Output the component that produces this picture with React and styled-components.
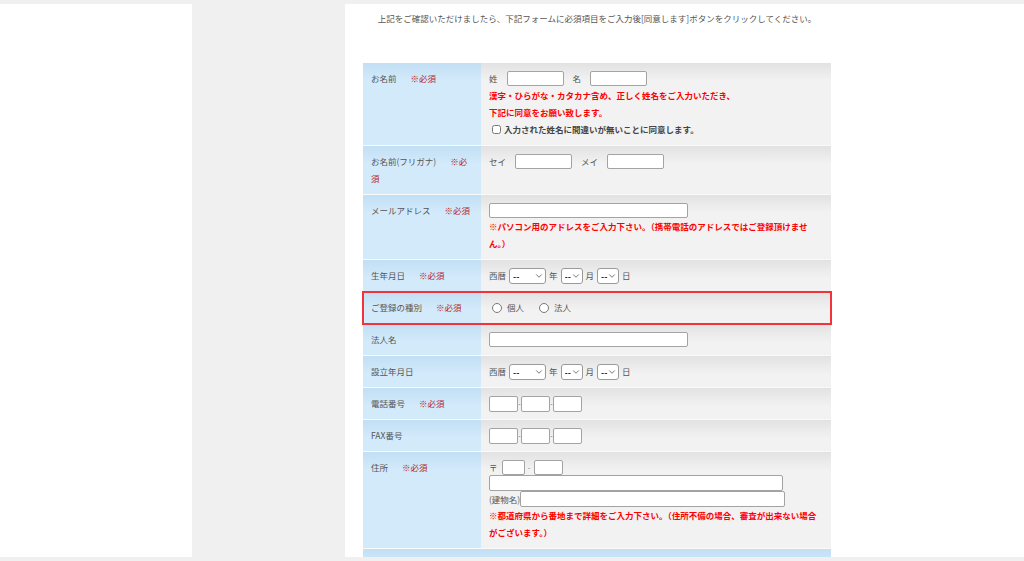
import React from 'react'
import styled, { createGlobalStyle } from 'styled-components'
import { ChevronDown } from 'lucide-react'

const GlobalStyle = createGlobalStyle`
  html, body {
    margin: 0;
    padding: 0;
    background: #f0f0f0;
  }
  body {
    font-family: "Noto Sans CJK JP", "Noto Sans", sans-serif;
    font-size: 8.5px;
    color: #555;
  }
`

const Page = styled.div`
  display: flex;
  margin-top: 4px;
  height: 553px;
  overflow: hidden;
`
const SideBlank = styled.div`
  flex: none;
  width: 192px;
  background: #fff;
`
const SideGray = styled.div`
  flex: none;
  width: 153px;
  background: #f0f0f0;
`
const Main = styled.main`
  flex: 1;
  background: #fff;
  padding: 0 18px;
`
const Content = styled.div`
  width: 468px;
`
const Intro = styled.p`
  margin: 6px 0 0;
  line-height: 17px;
  text-align: center;
  color: #555;
`
const Form = styled.div`
  margin-top: 36px;
  display: flex;
  flex-direction: column;
`
const Row = styled.div`
  display: grid;
  grid-template-columns: 118px 1fr;
  border-bottom: 1px solid #fafafa;
  ${p => p.$highlight && `
    position: relative;
    z-index: 1;
    outline: 2px solid #f2343a;
    outline-offset: -1px;
  `}
`
const Label = styled.div`
  padding: 7px 8px;
  line-height: 17px;
  background: linear-gradient(#c2dff4, #d3eafb 18px);
  color: #555;
`
const Req = styled.span`
  margin-left: 14px;
  color: #b3262b;
`
const Value = styled.div`
  padding: 7px 8px;
  line-height: 17px;
  background: linear-gradient(#e2e2e2, #f2f2f2 18px);
`
const Line = styled.div`
  display: flex;
  align-items: center;
  height: ${p => p.$h || 17}px;
  gap: ${p => p.$gap || 0}px;
`
const TextBox = styled.input`
  box-sizing: border-box;
  width: ${p => p.$w}px;
  height: ${p => p.$h || 15}px;
  margin: 0;
  padding: 0 2px;
  border: 1px solid #a3a3a3;
  border-radius: 2px;
  background: #fff;
  font: inherit;
`
const Dash = styled.span`
  width: ${p => p.$w || 3}px;
  text-align: center;
  font-size: 7px;
  color: #666;
`
const SelectWrap = styled.span`
  position: relative;
  display: inline-flex;
`
const Select = styled.select`
  box-sizing: border-box;
  appearance: none;
  width: ${p => p.$w}px;
  height: 16px;
  margin: 0;
  padding: 0 0 0 3px;
  border: 1px solid #9a9a9a;
  border-radius: 3px;
  background: #fff;
  color: #222;
  font-family: inherit;
  font-size: 8.5px;
  font-weight: bold;
`
const Arrow = styled(ChevronDown)`
  position: absolute;
  right: 2px;
  top: 3px;
  pointer-events: none;
  color: #333;
`
const Warn = styled.div`
  color: #f00;
  font-weight: bold;
`
const Agree = styled.label`
  display: flex;
  align-items: center;
  height: 17px;
  color: #444;
  font-weight: bold;
`
const Check = styled.input`
  width: 9px;
  height: 9px;
  margin: 0 3px 0 3px;
`
const Radio = styled.input`
  width: 10px;
  height: 10px;
  margin: 0 5px 0 3px;
`
const RadioText = styled.span`
  margin-right: 12px;
`
const FullRow = styled.div`
  height: 40px;
  background: linear-gradient(#c2dff4, #d3eafb 18px);
`

const Pick = ({ w }) => (
  <SelectWrap>
    <Select $w={w} defaultValue="--">
      <option>--</option>
    </Select>
    <Arrow size={10} strokeWidth={1.6} />
  </SelectWrap>
)

const DateFields = () => (
  <Line $gap={3}>
    <span>西暦</span>
    <Pick w={37} />
    <span>年</span>
    <Pick w={22} />
    <span>月</span>
    <Pick w={22} />
    <span>日</span>
  </Line>
)

const NumberFields = () => (
  <Line $h={17}>
    <TextBox $w={29} $h={16} />
    <Dash>-</Dash>
    <TextBox $w={29} $h={16} />
    <Dash>-</Dash>
    <TextBox $w={29} $h={16} />
  </Line>
)

const App = () => (
  <>
    <GlobalStyle />
    <Page>
      <SideBlank />
      <SideGray />
      <Main>
        <Content>
          <Intro>
            上記をご確認いただけましたら、下記フォームに必須項目をご入力後[同意します]ボタンをクリックしてください。
          </Intro>
          <Form>
            <Row>
              <Label>
                お名前<Req>※必須</Req>
              </Label>
              <Value>
                <Line $gap={9}>
                  <span>姓</span>
                  <TextBox $w={57} />
                  <span>名</span>
                  <TextBox $w={57} />
                </Line>
                <Warn>漢字・ひらがな・カタカナ含め、正しく姓名をご入力いただき、</Warn>
                <Warn>下記に同意をお願い致します。</Warn>
                <Agree>
                  <Check type="checkbox" />
                  入力された姓名に間違いが無いことに同意します。
                </Agree>
              </Value>
            </Row>
            <Row>
              <Label>
                お名前(フリガナ)<Req>※必須</Req>
              </Label>
              <Value>
                <Line $gap={9}>
                  <span>セイ</span>
                  <TextBox $w={57} />
                  <span>メイ</span>
                  <TextBox $w={57} />
                </Line>
              </Value>
            </Row>
            <Row>
              <Label>
                メールアドレス<Req>※必須</Req>
              </Label>
              <Value>
                <Line $h={16}>
                  <TextBox $w={199} />
                </Line>
                <Warn>
                  ※パソコン用のアドレスをご入力下さい。（携帯電話のアドレスではご登録頂けません。）
                </Warn>
              </Value>
            </Row>
            <Row>
              <Label>
                生年月日<Req>※必須</Req>
              </Label>
              <Value>
                <DateFields />
              </Value>
            </Row>
            <Row $highlight>
              <Label>
                ご登録の種別<Req>※必須</Req>
              </Label>
              <Value>
                <Line>
                  <Radio type="radio" name="kind" />
                  <RadioText>個人</RadioText>
                  <Radio type="radio" name="kind" />
                  <RadioText>法人</RadioText>
                </Line>
              </Value>
            </Row>
            <Row>
              <Label>法人名</Label>
              <Value>
                <Line>
                  <TextBox $w={199} />
                </Line>
              </Value>
            </Row>
            <Row>
              <Label>設立年月日</Label>
              <Value>
                <DateFields />
              </Value>
            </Row>
            <Row>
              <Label>
                電話番号<Req>※必須</Req>
              </Label>
              <Value>
                <NumberFields />
              </Value>
            </Row>
            <Row>
              <Label>FAX番号</Label>
              <Value>
                <NumberFields />
              </Value>
            </Row>
            <Row>
              <Label>
                住所<Req>※必須</Req>
              </Label>
              <Value>
                <Line $h={16}>
                  <span>〒</span>
                  <Dash $w={4} />
                  <TextBox $w={23} />
                  <Dash $w={9}>-</Dash>
                  <TextBox $w={29} />
                </Line>
                <Line $h={16}>
                  <TextBox $w={294} $h={16} />
                </Line>
                <Line $h={16}>
                  <span>(建物名)</span>
                  <TextBox $w={265} $h={16} />
                </Line>
                <Warn>
                  ※都道府県から番地まで詳細をご入力下さい。（住所不備の場合、審査が出来ない場合がございます。）
                </Warn>
              </Value>
            </Row>
            <FullRow />
          </Form>
        </Content>
      </Main>
    </Page>
  </>
)

export default App
